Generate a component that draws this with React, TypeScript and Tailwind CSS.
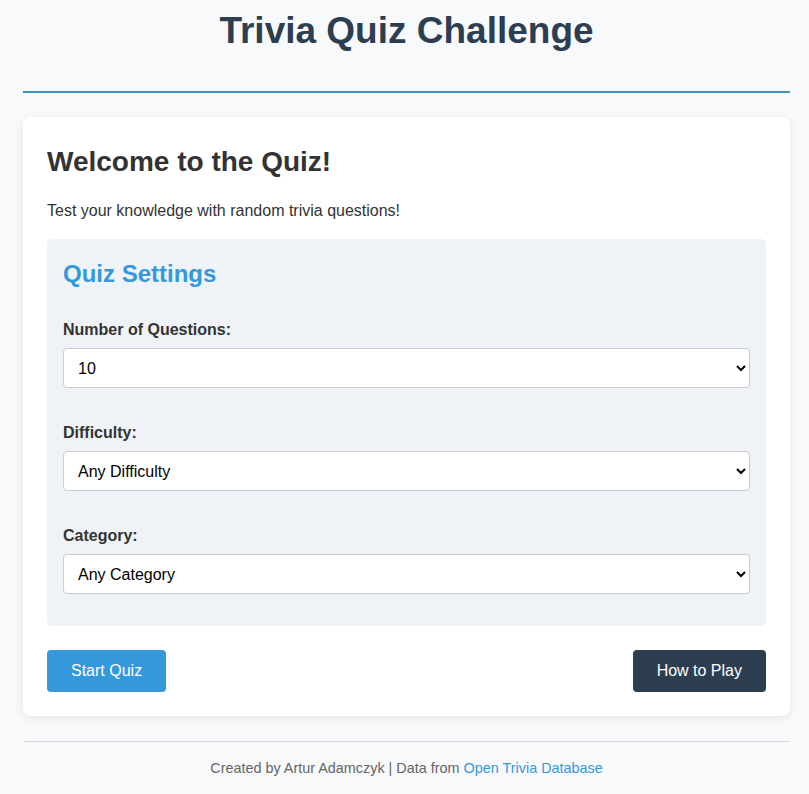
import React from "react";

const font = { fontFamily: '"Liberation Sans", Arial, sans-serif' };

function Field({ label, value, options, last }: { label: string; value: string; options: string[]; last?: boolean }) {
  return (
    <div className={last ? "" : "mb-[36px]"}>
      <label className="block text-[16px] leading-[18px] font-bold text-[#333333] mb-[9px]">{label}</label>
      <select
        defaultValue={value}
        className="block w-full h-[40px] px-[10px] text-[16px] text-black bg-white border border-[#cccccc] rounded-[4px]"
        style={font}
      >
        {options.map((o) => (
          <option key={o} value={o}>{o}</option>
        ))}
      </select>
    </div>
  );
}

export default function App() {
  return (
    <div className="min-h-[794px] bg-[#f7f9fb] text-[#333333]" style={font}>
      <div className="ml-[23px] w-[767px]">
        <header className="border-b-2 border-[#4593bb] pt-[10px] pb-[39px]">
          <h1 className="text-center text-[37px] leading-[42px] font-bold text-[#2c3e50]">Trivia Quiz Challenge</h1>
        </header>
        <main className="mt-[24px] bg-white rounded-[8px] shadow-[0_2px_10px_rgba(0,0,0,0.08)] px-[24px] pt-[29px] pb-[24px]">
          <h2 className="text-[28px] leading-[32px] font-bold text-[#333333]">Welcome to the Quiz!</h2>
          <p className="mt-[24px] text-[16px] leading-[18px] text-[#333333]">Test your knowledge with random trivia questions!</p>
          <section className="mt-[19px] bg-[#eff3f8] rounded-[5px] px-[16px] pt-[21px] pb-[32px]">
            <h3 className="text-[24px] leading-[28px] font-bold text-[#3498db] mb-[33px]">Quiz Settings</h3>
            <Field label="Number of Questions:" value="10" options={["5", "10", "15", "20"]} />
            <Field label="Difficulty:" value="Any Difficulty" options={["Any Difficulty", "Easy", "Medium", "Hard"]} />
            <Field label="Category:" value="Any Category" options={["Any Category", "General Knowledge", "Science", "History"]} last />
          </section>
          <div className="mt-[24px] flex justify-between">
            <button className="h-[42px] px-[24px] bg-[#3498db] text-white text-[16px] rounded-[4px]" style={font}>Start Quiz</button>
            <button className="h-[42px] px-[24px] bg-[#2c3e50] text-white text-[16px] rounded-[4px]" style={font}>How to Play</button>
          </div>
        </main>
        <footer className="mt-[25px] border-t border-[#d8dbdf] pt-[18px] text-center text-[14.4px] leading-[17px] text-[#666666]">
          Created by Artur Adamczyk | Data from <a className="text-[#3498db]" href="#">Open Trivia Database</a>
        </footer>
      </div>
    </div>
  );
}
